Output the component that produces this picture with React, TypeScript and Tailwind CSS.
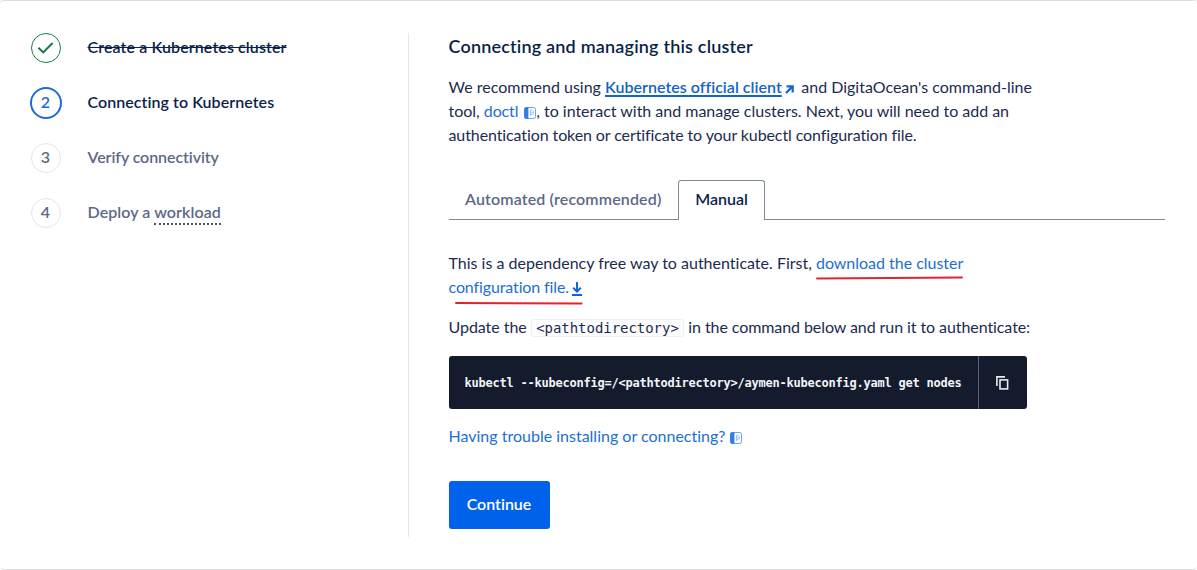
import type { ReactNode } from "react";

function DocIcon() {
  return (
    <svg className="inline-block h-3 w-3 align-[-1.5px]" viewBox="0 0 12 12" fill="none">
      <rect x="0.5" y="0.5" width="11" height="11" rx="1.8" fill="#fff" stroke="#6aa5ea" />
      <path d="M2 0.2H4.4V11.8H2A1.8 1.8 0 0 1 .2 10V2A1.8 1.8 0 0 1 2 .2Z" fill="#2f7ddf" />
      <path d="M6.4 9V3.2H8L9.4 4.6V6.6L8 7.4H6.6M7 5.4h1.4" stroke="#8bb9ef" strokeWidth="0.9" />
    </svg>
  );
}

function ExternalArrow() {
  return (
    <svg className="ml-[3.5px] inline-block h-[9px] w-[9px] align-[-1px]" viewBox="0 0 9 9" fill="none" stroke="#1264dc" strokeWidth="2.2">
      <path d="M1.5 1.3H7.7V7.5M7.6 1.4L1 8" />
    </svg>
  );
}

function Step({ badge, circle, label }: { badge: ReactNode; circle: string; label: ReactNode }) {
  return (
    <li className="flex h-[55px] items-center">
      <span className="flex w-8 shrink-0 justify-center">
        <span className={`flex items-center justify-center rounded-full pr-px pb-[2px] ${circle}`}>{badge}</span>
      </span>
      <span className="mb-[2px] ml-[25.5px] whitespace-nowrap font-semibold">{label}</span>
    </li>
  );
}

export default function App() {
  return (
    <main className="flex h-[570px] w-[1197px] overflow-hidden rounded-[4px] border-y border-[#dcdddf] bg-white font-[Lato,'Open_Sans',sans-serif] text-[16px] leading-6 text-[#1b2b4f] [font-variant-ligatures:none]">
      <ol className="mt-[19.5px] w-[378px] shrink-0 pl-[30px]">
        <Step
          circle="h-[30px] w-[30px] border border-[#15803f]"
          badge={
            <svg width="17" height="13" viewBox="0 0 17 13" fill="none" stroke="#157a43" strokeWidth="2">
              <path d="M1.4 6.8L6.2 11.4L15.6 2" />
            </svg>
          }
          label={<span className="tracking-[0.11px] text-[#0b1f4b] line-through">Create a Kubernetes cluster</span>}
        />
        <Step
          circle="h-8 w-8 border-2 border-[#1f6bd6] font-semibold text-[#1f6bd6]"
          badge="2"
          label={<span className="tracking-[0.06px] text-[#0b1f4b]">Connecting to Kubernetes</span>}
        />
        <Step
          circle="h-[30px] w-[30px] border border-[#e3e6ea] font-semibold text-[#5b6987]"
          badge="3"
          label={<span className="tracking-[-0.08px] text-[#5b6987]">Verify connectivity</span>}
        />
        <Step
          circle="h-[30px] w-[30px] border border-[#e3e6ea] font-semibold text-[#5b6987]"
          badge="4"
          label={
            <span className="tracking-[0.08px] text-[#5b6987]">
              Deploy a <span className="border-b-2 border-dotted border-[#44516f] pb-[2px]">workload</span>
            </span>
          }
        />
      </ol>

      <section className="mt-8 ml-[30px] h-[504px] w-[757px] shrink-0 border-l border-[#e3e6ea] pl-[39.5px]">
        <h2 className="mt-[0.5px] text-[18px] leading-6 font-semibold tracking-[0.19px] text-[#0b1f4b]">
          Connecting and managing this cluster
        </h2>
        <p className="mt-[17.5px] whitespace-nowrap">
          We recommend using{" "}
          <a className="font-semibold tracking-[0.03px] text-[#1264c8] underline decoration-2 underline-offset-2">
            Kubernetes official client
          </a>
          <ExternalArrow />
          <span className="ml-[7px]">and DigitaOcean's command-line</span>
          <br />
          tool,{" "}
          <a className="tracking-[-0.15px] text-[#1d6fd0]">doctl</a>
          <span className="ml-[6px]">
            <DocIcon />
          </span>
          <span className="tracking-[-0.015px]">
            , to interact with and manage clusters. Next, you will need to add an
          </span>
          <br />
          <span className="tracking-[-0.1px]">
            authentication token or certificate to your kubectl configuration file.
          </span>
        </p>

        <div className="mt-[33px] ml-[0.5px] flex h-10 w-[716px] font-semibold">
          <div className="w-[229px] border-b border-[#7d8a99] pt-[7px] pl-4 whitespace-nowrap tracking-[0.14px] text-[#5b6987]">
            Automated (recommended)
          </div>
          <div className="w-[87px] rounded-t-[3px] border border-b-0 border-[#7d8a99] pt-[6px] text-center text-[#0b1f4b]">
            Manual
          </div>
          <div className="flex-1 border-b border-[#7d8a99]" />
        </div>

        <p className="relative mt-[31px] whitespace-nowrap">
          This is a dependency free way to authenticate. First,{" "}
          <a className="tracking-[-0.02px] text-[#1d6fd0]">download the cluster</a>
          <br />
          <a className="tracking-[-0.12px] text-[#1d6fd0]">configuration file.</a>
          <svg className="ml-[3.5px] inline-block h-[14px] w-[10px] align-[-3px]" viewBox="0 0 10 14" fill="none" stroke="#1264dc" strokeWidth="2">
            <path d="M5 0V9.5M1.2 5.8L5 9.6L8.8 5.8M0 13H10" />
          </svg>
          <svg className="absolute top-px left-[0.5px] h-14 w-[520px]" viewBox="0 0 520 56" fill="none" stroke="#e0252f" strokeWidth="2" strokeLinecap="round">
            <path d="M368 26.6L513 25.6M7 51L132.5 51.6" />
          </svg>
        </p>

        <p className="mt-4 whitespace-nowrap">
          <span className="tracking-[-0.05px]">Update the</span>
          <code className="mx-[4.5px] inline-block rounded-[2px] border border-[#f0f0f0] bg-[#fcfcfc] px-1 font-['DejaVu_Sans_Mono',monospace] text-[14px] leading-4 tracking-[-0.04px]">
            &lt;pathtodirectory&gt;
          </code>
          <span className="tracking-[-0.08px]">in the command below and run it to authenticate:</span>
        </p>

        <div className="mt-[17px] ml-[0.5px] flex h-[53px] w-[578px] overflow-hidden rounded-[3px] bg-[#141b2d]">
          <pre className="w-[529px] shrink-0 pl-[15.5px] font-['DejaVu_Sans_Mono',monospace] text-[12px] leading-[55px] font-bold tracking-[-0.225px] text-[#f2f4f7]">
            kubectl --kubeconfig=/&lt;pathtodirectory&gt;/aymen-kubeconfig.yaml get nodes
          </pre>
          <button className="flex flex-1 items-center justify-center border-l border-[#5b6578] pr-px">
            <svg width="13" height="14" viewBox="0 0 13 14" fill="none" stroke="#e8ebf0" strokeWidth="1.6">
              <path d="M0.9 10V0.9H9" />
              <rect x="4" y="3.9" width="7.6" height="9" />
            </svg>
          </button>
        </div>

        <p className="mt-[15px] whitespace-nowrap">
          <a className="text-[#1d6fd0]">Having trouble installing or connecting?</a>
          <span className="ml-[5px]">
            <DocIcon />
          </span>
        </p>

        <button className="mt-[33px] ml-[0.5px] h-12 w-[101px] rounded-[3px] bg-[#0061eb] pr-px pb-[2px] font-semibold text-white">
          Continue
        </button>
      </section>
    </main>
  );
}
